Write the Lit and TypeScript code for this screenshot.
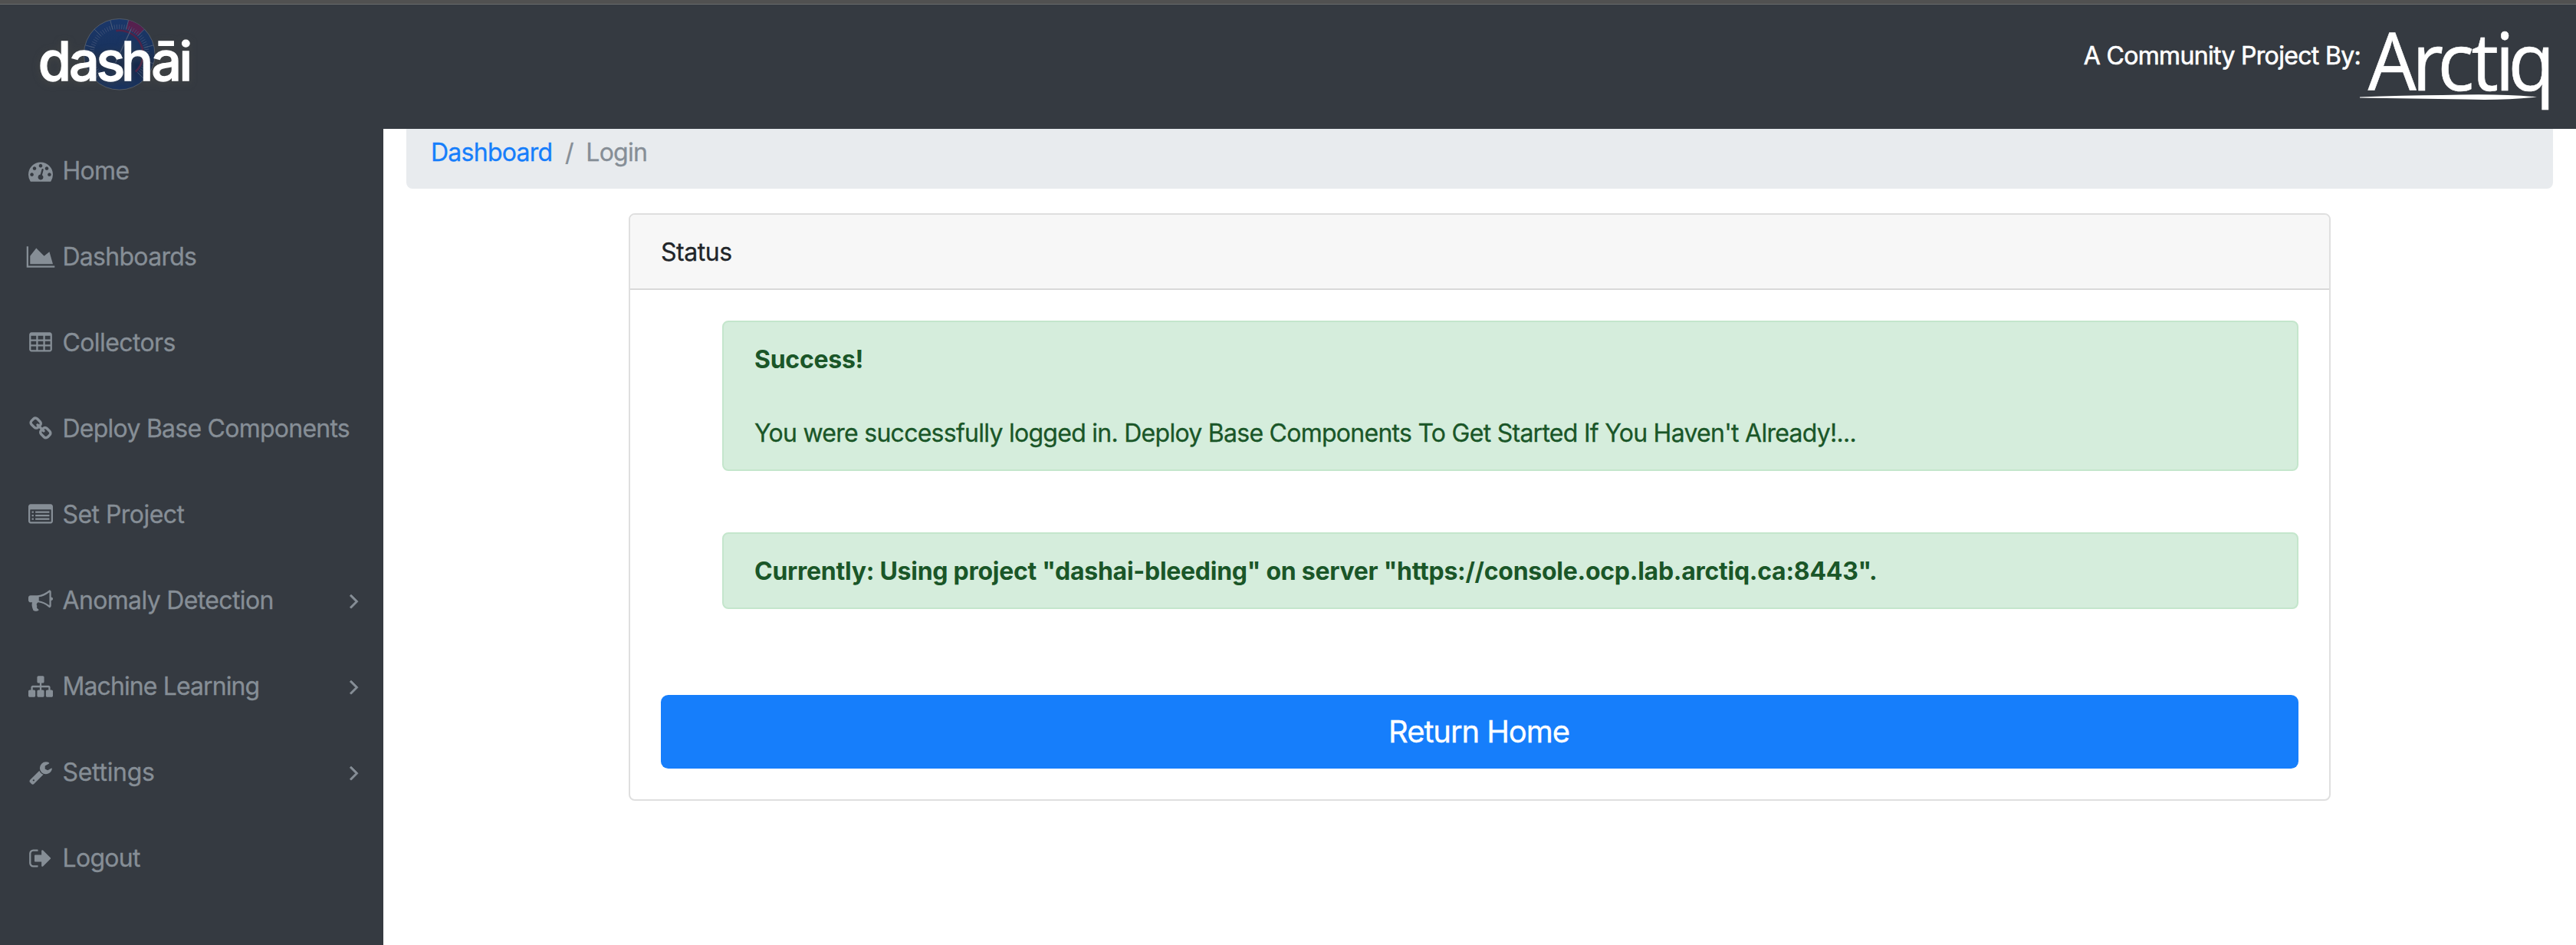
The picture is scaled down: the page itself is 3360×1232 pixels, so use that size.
import { LitElement, html, svg, css } from "lit";
import { customElement, property } from "lit/decorators.js";
import { styleMap } from "lit/directives/style-map.js";

const cell = (x: number, y: number) => `M${x} ${y}h384v256h-384z`;

const ICONS: Record<string, string> = {
  tachometer:
    "M384 1152q0-53-37.5-90.5t-90.5-37.5-90.5 37.5-37.5 90.5 37.5 90.5 90.5 37.5 90.5-37.5 37.5-90.5zm192-448q0-53-37.5-90.5t-90.5-37.5-90.5 37.5-37.5 90.5 37.5 90.5 90.5 37.5 90.5-37.5 37.5-90.5zm428 481l101-382q6-26-7.5-48.5t-38.5-29.5-48 6.5-30 39.5l-101 382q-60 5-107 43.5t-63 98.5q-20 77 20 146t117 89 146-20 89-117q16-60-6-117t-72-91zm660-33q0-53-37.5-90.5t-90.5-37.5-90.5 37.5-37.5 90.5 37.5 90.5 90.5 37.5 90.5-37.5 37.5-90.5zm-640-640q0-53-37.5-90.5t-90.5-37.5-90.5 37.5-37.5 90.5 37.5 90.5 90.5 37.5 90.5-37.5 37.5-90.5zm448 192q0-53-37.5-90.5t-90.5-37.5-90.5 37.5-37.5 90.5 37.5 90.5 90.5 37.5 90.5-37.5 37.5-90.5zm320 448q0 261-141 483-19 29-54 29h-1402q-35 0-54-29-141-221-141-483 0-182 71-348t191-286 286-191 348-71 348 71 286 191 191 286 71 348z",
  area: "M1920 1536v128h-2048v-1536h128v1408h1920zm-384-1024l256 896h-1664v-576l448-576 576 576z",
  table:
    "M1728 288v1088q0 66-47 113t-113 47h-1344q-66 0-113-47t-47-113v-1088q0-66 47-113t113-47h1344q66 0 113 47t47 113z" +
    [192, 704, 1216].map((x) => [384, 768, 1152].map((y) => cell(x, y)).join("")).join(""),
  link: "M1520 1216q0-40-28-68l-208-208q-28-28-68-28-42 0-72 32 3 3 19 18.5t21.5 21.5 15 19 13 25.5 3.5 27.5q0 40-28 68t-68 28q-15 0-27.5-3.5t-25.5-13-19-15-21.5-21.5-18.5-19q-33 31-33 73 0 40 28 68l206 207q27 27 68 27 40 0 68-26l147-146q28-28 28-67zm-703-705q0-40-28-68l-206-207q-28-28-68-28-39 0-68 27l-147 146q-28 28-28 67 0 40 28 68l208 208q27 27 68 27 42 0 72-31-3-3-19-18.5t-21.5-21.5-15-19-13-25.5-3.5-27.5q0-40 28-68t68-28q15 0 27.5 3.5t25.5 13 19 15 21.5 21.5 18.5 19q33-31 33-73zm895 705q0 120-85 203l-147 146q-83 83-203 83-121 0-204-85l-206-207q-83-83-83-203 0-123 88-209l-88-88q-86 88-208 88-120 0-204-84l-208-208q-84-84-84-204t85-203l147-146q83-83 203-83 121 0 204 85l206 207q83 83 83 203 0 123-88 209l88 88q86-88 208-88 120 0 204 84l208 208q84 84 84 204z",
  list:
    "M1792 288v1088q0 66-47 113t-113 47h-1472q-66 0-113-47t-47-113v-1088q0-66 47-113t113-47h1472q66 0 113 47t47 113zM128 544v832q0 32 32 32h1472q32 0 32-32v-832q0-32-32-32h-1472q-32 0-32 32z" +
    [640, 896, 1152].map((y) => `M256 ${y}h128v128h-128zM512 ${y}h1024v128h-1024z`).join(""),
  bullhorn:
    "M1664 640q53 0 90.5 37.5t37.5 90.5-37.5 90.5-90.5 37.5v384q0 52-38 90t-90 38q-417-347-812-380-58 19-91 66t-31 100.5 40 92.5q-20 33-23 65.5t6 58 33.5 55 48 50 61.5 50.5q-29 58-111.5 83t-168.5 11.5-132-55.5q-7-23-29.5-87.5t-32-94.5-23-89-15-101 3.5-98.5 22-110.5h-122q-66 0-113-47t-47-113v-192q0-66 47-113t113-47h480q435 0 896-384 52 0 90 38t38 90v384zm-128 604v-954q-394 302-768 343v270q377 42 768 341z",
  sitemap:
    "M1792 1248v320q0 40-28 68t-68 28h-320q-40 0-68-28t-28-68v-320q0-40 28-68t68-28h96v-192h-512v192h96q40 0 68 28t28 68v320q0 40-28 68t-68 28h-320q-40 0-68-28t-28-68v-320q0-40 28-68t68-28h96v-192h-512v192h96q40 0 68 28t28 68v320q0 40-28 68t-68 28h-320q-40 0-68-28t-28-68v-320q0-40 28-68t68-28h96v-192q0-52 38-90t90-38h512v-192h-96q-40 0-68-28t-28-68v-320q0-40 28-68t68-28h320q40 0 68 28t28 68v320q0 40-28 68t-68 28h-96v192h512q52 0 90 38t38 90v192h96q40 0 68 28t28 68z",
  wrench:
    "M448 1472q0-26-19-45t-45-19-45 19-19 45 19 45 45 19 45-19 19-45zm644-420l-682 682q-37 37-90 37-52 0-91-37l-106-108q-38-36-38-90 0-53 38-91l681-681q39 98 114.5 173.5t173.5 114.5zm634-435q0 39-23 106-47 134-164.5 217.5t-258.5 83.5q-185 0-316.5-131.5t-131.5-316.5 131.5-316.5 316.5-131.5q58 0 121.5 16.5t107.5 46.5q16 11 16 28t-16 28l-293 169v224l193 107q5-3 79-48.5t135.5-81 70.5-35.5q15 0 23.5 10t8.5 25z",
  signout:
    "M704 1440q0 4 1 20t.5 26.5-3 23.5-10 19.5-20.5 6.5h-320q-119 0-203.5-84.5t-84.5-203.5v-704q0-119 84.5-203.5t203.5-84.5h320q13 0 22.5 9.5t9.5 22.5q0 4 1 20t.5 26.5-3 23.5-10 19.5-20.5 6.5h-320q-66 0-113 47t-47 113v704q0 66 47 113t113 47h312l11.5 1 11.5 3 8 5.5 7 9 2 13.5zm928-544q0 26-19 45l-544 544q-19 19-45 19t-45-19-19-45v-288h-448q-26 0-45-19t-19-45v-384q0-26 19-45t45-19h448v-288q0-26 19-45t45-19 45 19l544 544q19 19 19 45z",
  angle:
    "M1171 960q0 13-10 23l-466 466q-10 10-23 10t-23-10l-50-50q-10-10-10-23t10-23l393-393-393-393q-10-10-10-23t10-23l50-50q10-10 23-10t23 10l466 466q10 10 10 23z",
};

@customElement("ui-icon")
export class UiIcon extends LitElement {
  @property() name = "";
  static styles = css`
    :host { display: block; width: 32px; height: 32px; }
    .glyph { display: block; width: 32px; height: 32px; overflow: visible; fill: currentColor; }
    .heavy { stroke: currentColor; stroke-width: 44px; }
  `;
  render() {
    const cls = this.name === "angle" ? "glyph heavy" : "glyph";
    return html`<svg class=${cls} viewBox="0 0 1792 1792"><path fill-rule="evenodd" d=${ICONS[this.name] ?? ""}></path></svg>`;
  }
}

/* Point on the gauge, angle in degrees clockwise from the top. */
const CX = 155.7;
const CY = 64.8;
const pt = (r: number, deg: number) => {
  const a = (deg * Math.PI) / 180;
  return `${(CX + r * Math.sin(a)).toFixed(2)} ${(CY - r * Math.cos(a)).toFixed(2)}`;
};
const tick = (r1: number, r2: number, deg: number) => `M${pt(r1, deg)}L${pt(r2, deg)}`;
const range = (from: number, to: number, step: number) => {
  const out: number[] = [];
  for (let v = from; v <= to; v += step) out.push(v);
  return out;
};

@customElement("dashai-logo")
export class DashaiLogo extends LitElement {
  static styles = css`
    :host { display: block; width: 280px; height: 162px; }
    .logo { display: block; }
    .word { font: 500 70px Inter, "Open Sans", sans-serif; fill: #fff; stroke: #fff; stroke-width: 1.3px; filter: drop-shadow(0 2px 5px rgba(80, 80, 72, 0.5)); }
  `;
  render() {
    return html`<svg class="logo" width="280" height="162" viewBox="0 0 280 162">
      <defs>
        <linearGradient id="dial" x1="0" y1="0" x2="0" y2="1">
          <stop offset="0" stop-color="#1a376a" />
          <stop offset="0.4" stop-color="#19335f" />
          <stop offset="0.65" stop-color="#12264c" />
          <stop offset="1" stop-color="#193461" />
        </linearGradient>
      </defs>
      ${svg`
        <circle cx=${CX} cy=${CY} r="46.3" fill="url(#dial)" stroke="#5a6068" stroke-width="0.9" />
        <path fill="#56204e" d="M${pt(46, 15)}A46 46 0 0 1 ${pt(46, 45)}L${pt(34, 45)}A34 34 0 0 0 ${pt(34, 15)}Z" />
        <path fill="none" stroke="#4f2449" stroke-width="2.6" d="M${pt(31, -8)}A31 31 0 0 1 ${pt(31, 137)}" />
        <path stroke="#43547a" stroke-width="0.8" d="${range(-135, 135, 5).map((d) => tick(33, 39, d)).join("")}" />
        <path stroke="#4a5b78" stroke-width="1" d="${range(-135, 135, 30).map((d) => tick(34, 46, d)).join("")}" />
        <path stroke="#4f5f7c" stroke-width="1.2" d="M${pt(36, 25)}L${pt(-12, 25)}" />
      `}
      <text class="word" x="49.800 90 125.600 158 197.300 233.500" y="98.700">dashāi</text>
    </svg>`;
  }
}

@customElement("arctiq-logo")
export class ArctiqLogo extends LitElement {
  static styles = css`
    :host { display: block; width: 251px; height: 162px; margin-right: 30px; }
    .logo { display: block; overflow: visible; }
    .word { font: 500 105px "Open Sans", "Noto Sans", sans-serif; fill: #fff; stroke: #fff; stroke-width: 0.6px; }
  `;
  render() {
    return html`<svg class="logo" width="251" height="162" viewBox="3 0 251 162">
      <text class="word" transform="scale(0.95 1)" x="13.5 73.9 108.9 155.3 187.8 205.9" y="112">Arctiq</text>
      <path fill="#fff" d="M2 120.400Q60 118.500 110 118Q185 115.500 233 120.500Q190 125 140 123.500Q70 122.500 2 121.400Z" />
    </svg>`;
  }
}

interface NavItem {
  icon: string;
  label: string;
  tracking: number;
  more?: boolean;
}

const NAV: NavItem[] = [
  { icon: "tachometer", label: "Home", tracking: -0.7 },
  { icon: "area", label: "Dashboards", tracking: -0.72 },
  { icon: "table", label: "Collectors", tracking: -0.6 },
  { icon: "link", label: "Deploy Base Components", tracking: -0.75 },
  { icon: "list", label: "Set Project", tracking: -0.55 },
  { icon: "bullhorn", label: "Anomaly Detection", tracking: -0.65, more: true },
  { icon: "sitemap", label: "Machine Learning", tracking: -0.9, more: true },
  { icon: "wrench", label: "Settings", tracking: -0.3, more: true },
  { icon: "signout", label: "Logout", tracking: -0.7 },
];

@customElement("app-root")
export class AppRoot extends LitElement {
  static styles = css`
    :host {
      display: flex;
      flex-direction: column;
      height: 1232px;
      overflow: hidden;
      background: #fff;
      color: #212529;
      font: 400 32px/48px Inter, "Liberation Sans", sans-serif;
      letter-spacing: -0.73px;
      -webkit-text-stroke: 0.3px currentColor;
    }
    * { box-sizing: border-box; }
    .strip { flex: none; height: 6px; background: #515151; border-bottom: 1px solid #686b6c; }
    .header { flex: none; height: 162px; display: flex; align-items: flex-start; background: #353a41; color: #fff; }
    dashai-logo, arctiq-logo { -webkit-text-stroke: 0; }
    .credit { margin: 43px 0 0 auto; -webkit-text-stroke-width: 0.6px; letter-spacing: -0.68px; }
    .body { flex: 1; display: flex; min-height: 0; }
    .side { width: 500px; flex: none; padding: 31px 0 0; display: flex; flex-direction: column; gap: 64px; background: #353a41; color: #868e96; }
    .item { display: flex; height: 48px; padding: 0 22px 0 36.5px; color: inherit; text-decoration: none; }
    .icon { margin-top: 7.5px; }
    .label { margin-left: 13px; flex: 1; white-space: nowrap; }
    .main { flex: 1; padding: 0 30px; display: flex; flex-direction: column; }
    .crumbs { display: flex; gap: 16.5px; padding: 7px 32px 23px; background: #e8ebee; border-radius: 0 0 8px 8px; color: #868e96; }
    .crumb-link { color: #167efb; text-decoration: none; }
    .card { width: 2220px; margin: 32px auto 0; border: 2px solid #dfdfdf; border-radius: 8px; overflow: hidden; }
    .card-head { padding: 25px 40px 23px; background: #f7f7f7; border-bottom: 2px solid #d9d9d9; letter-spacing: -0.45px; }
    .card-body { padding: 40px; display: flex; flex-direction: column; }
    .alert { margin-left: 80px; padding: 25px 40px 23px; border: 2px solid #c4e6cc; border-radius: 8px; background: #d5eddc; color: #1a5628; }
    .notice { display: flex; flex-direction: column; gap: 48px; }
    .project { margin-top: 80px; }
    .strong { font-weight: 700; letter-spacing: -0.27px; -webkit-text-stroke-width: 0; }
    .button { margin-top: 112px; height: 96px; border: 0; border-radius: 9.6px; padding: 0 2px 0 0; background: #167efb; color: #fff; font: 400 40px/60px Inter, "Liberation Sans", sans-serif; letter-spacing: -1.1px; }
  `;

  render() {
    return html`
      <div class="strip"></div>
      <header class="header">
        <dashai-logo></dashai-logo>
        <span class="credit">A Community Project By:</span>
        <arctiq-logo></arctiq-logo>
      </header>
      <div class="body">
        <nav class="side">
          ${NAV.map(
            (n) => html`<a class="item">
              <ui-icon class="icon" name=${n.icon}></ui-icon>
              <span class="label" style=${styleMap({ letterSpacing: `${n.tracking}px` })}>${n.label}</span>
              ${n.more ? html`<ui-icon class="icon" name="angle"></ui-icon>` : null}
            </a>`
          )}
        </nav>
        <main class="main">
          <div class="crumbs">
            <a class="crumb-link">Dashboard</a><span>/</span><span>Login</span>
          </div>
          <section class="card">
            <div class="card-head">Status</div>
            <div class="card-body">
              <div class="alert notice">
                <span class="strong">Success!</span>
                <span>You were successfully logged in. Deploy Base Components To Get Started If You Haven't Already!...</span>
              </div>
              <div class="alert project">
                <span class="strong">Currently: Using project "dashai-bleeding" on server "https://console.ocp.lab.arctiq.ca:8443".</span>
              </div>
              <button class="button">Return Home</button>
            </div>
          </section>
        </main>
      </div>
    `;
  }
}
